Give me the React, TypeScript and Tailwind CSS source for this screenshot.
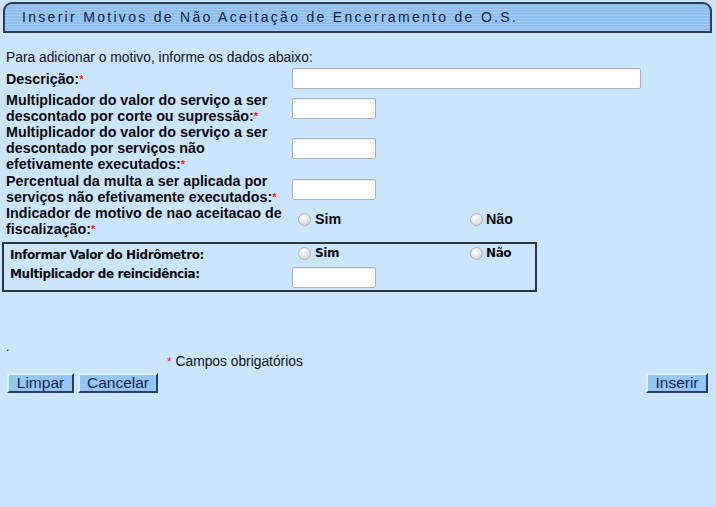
import React from "react";

const Req = () => <span className="text-[#ff2020] text-[11px] align-top">*</span>;

const Radio = ({ name }: { name: string }) => (
  <input
    type="radio"
    name={name}
    className="appearance-none w-[13px] h-[13px] rounded-full border border-[#b4b4b4] bg-[radial-gradient(circle_at_40%_35%,#ffffff_0%,#e2e2e2_55%,#c4c4c4_100%)] m-0"
  />
);

const TextBox = ({ wide }: { wide?: boolean }) => (
  <input
    type="text"
    className={`${wide ? "w-[349px]" : "w-[84px]"} h-[21px] bg-white border border-[#b0b0b0] rounded-[2px] shadow-[inset_0_1px_1px_rgba(0,0,0,0.08)] outline-none`}
  />
);

const Button = ({ label, className }: { label: string; className?: string }) => (
  <button
    className={`h-[20px] px-[6px] bg-[#93c5f5] text-[#1a1f4d] text-[15.5px] leading-none border-2 border-t-[#dbeeff] border-l-[#dbeeff] border-b-[#2b3a66] border-r-[#2b3a66] ${className ?? ""}`}
  >
    {label}
  </button>
);

export default function App() {
  return (
    <div className="w-[716px] h-[507px] bg-[#cce5fe] font-['Liberation_Sans',Arial,sans-serif] text-[#111] overflow-hidden">
      {/* Header */}
      <div className="pt-[2px] pl-[3px] pr-[4px]">
        <div className="h-[31px] rounded-t-[9px] border-2 border-[#2e3d55] bg-[#8fc0ef] bg-[repeating-linear-gradient(180deg,#8ebff0_0px,#8ebff0_2px,#a3ccf4_2px,#a3ccf4_3px)] flex items-center pl-[17px]">
          <span className="text-[14px] tracking-[2.3px] text-[#101a4a]">
            Inserir Motivos de Não Aceitação de Encerramento de O.S.
          </span>
        </div>
      </div>

      <div className="pl-[6px] pr-[6px]">
        <p className="mt-[18px] text-[13.8px] leading-[14px]">Para adicionar o motivo, informe os dados abaixo:</p>

        <div className="text-[14.3px] font-bold leading-[16px] text-[#0a0a0a]">
          <div className="flex items-center h-[27px]">
            <div className="w-[286px]">
              Descrição:<Req />
            </div>
            <TextBox wide />
          </div>

          <div className="flex items-center">
            <div className="w-[286px]">
              Multiplicador do valor do serviço a ser
              <br />
              descontado por corte ou supressão:<Req />
            </div>
            <TextBox />
          </div>

          <div className="flex items-center">
            <div className="w-[286px]">
              Multiplicador do valor do serviço a ser
              <br />
              descontado por serviços não
              <br />
              efetivamente executados:<Req />
            </div>
            <TextBox />
          </div>

          <div className="flex items-center mt-[1px]">
            <div className="w-[286px]">
              Percentual da multa a ser aplicada por
              <br />
              serviços não efetivamente executados:<Req />
            </div>
            <TextBox />
          </div>

          <div className="flex items-center">
            <div className="w-[286px] whitespace-nowrap">
              Indicador de motivo de nao aceitacao de
              <br />
              fiscalização:<Req />
            </div>
            <div className="w-[178px] flex items-center gap-[4px] pl-[6px] -mt-[4px]">
              <Radio name="fisc" />
              <span>Sim</span>
            </div>
            <div className="flex items-center gap-[3px] -mt-[4px]">
              <Radio name="fisc" />
              <span>Não</span>
            </div>
          </div>
        </div>

        {/* Boxed section */}
        <div className="-ml-[4px] mt-[5px] w-[535px] border-2 border-[#2e3440] pl-[6px] pt-[1px] pb-[1px] text-[12px] font-bold leading-[16px] font-['DejaVu_Sans',sans-serif] tracking-[-0.4px] text-[#0a0a0a]">
          <div className="flex items-center h-[20px]">
            <div className="w-[282px]">Informar Valor do Hidrômetro:</div>
            <div className="w-[178px] flex items-center gap-[4px] pl-[6px] -mt-[4px]">
              <Radio name="hidro" />
              <span>Sim</span>
            </div>
            <div className="flex items-center gap-[3px] -mt-[4px]">
              <Radio name="hidro" />
              <span>Não</span>
            </div>
          </div>
          <div className="flex items-start h-[24px]">
            <div className="w-[282px] pt-[1px]">Multiplicador de reincidência:</div>
            <div className="pt-[2px]">
              <TextBox />
            </div>
          </div>
        </div>

        <div className="mt-[48px] text-[12px] leading-[14px]">.</div>
        <div className="mt-[1px] pl-[161px] text-[13.8px] leading-[14px]">
          <span className="text-[#ff2020] text-[12px] align-top">*</span> Campos obrigatórios
        </div>

        <div className="mt-[4px] flex items-center">
          <div className="flex gap-[4px] ml-[1px]">
            <Button label="Limpar" className="w-[67px]" />
            <Button label="Cancelar" className="w-[80px]" />
          </div>
          <div className="flex-1" />
          <Button label="Inserir" className="w-[62px] mr-[2px]" />
        </div>
      </div>
    </div>
  );
}
